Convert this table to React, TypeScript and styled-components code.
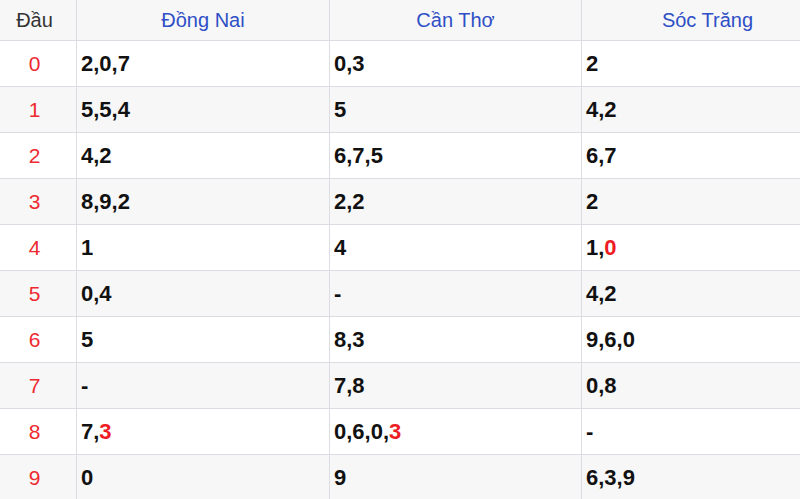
import React from "react";
import styled, { createGlobalStyle } from "styled-components";

const Global = createGlobalStyle`
  html, body { margin: 0; padding: 0; background: #fff; overflow: hidden; }
  body { font-family: "Liberation Sans", Arial, sans-serif; }
`;

const Viewport = styled.div`
  width: 800px;
  height: 499px;
  overflow: hidden;
`;

const Table = styled.div`
  width: 833px;
  display: flex;
  flex-direction: column;
`;

const Row = styled.div<{ $head?: boolean; $shade?: boolean }>`
  display: grid;
  grid-template-columns: 76px 253px 252px 252px;
  height: ${(p) => (p.$head ? "40px" : "46px")};
  box-sizing: border-box;
  border-top: ${(p) => (p.$head ? "none" : "1px solid #dcdde3")};
  background: ${(p) => (p.$shade ? "#f7f7f7" : "#ffffff")};
`;

const Cell = styled.div<{ $first?: boolean }>`
  box-sizing: border-box;
  display: flex;
  align-items: center;
  border-left: ${(p) => (p.$first ? "none" : "1px solid #dcdde3")};
  padding-right: ${(p) => (p.$first ? "7px" : "0")};
`;

const HeadCell = styled(Cell)<{ $blue?: boolean }>`
  justify-content: center;
  font-size: 20px;
  color: ${(p) => (p.$blue ? "#2f4fc6" : "#333333")};
`;

const KeyCell = styled(Cell)`
  justify-content: center;
  font-size: 21px;
  color: #ee2a31;
`;

const ValueCell = styled(Cell)`
  padding-left: 4px;
  font-size: 22px;
  font-weight: 700;
  color: #111111;
`;

const Hot = styled.span`
  color: #ee1c24;
`;

type V = { text: string; hot?: string };

const rows: V[][] = [
  [{ text: "2,0,7" }, { text: "0,3" }, { text: "2" }],
  [{ text: "5,5,4" }, { text: "5" }, { text: "4,2" }],
  [{ text: "4,2" }, { text: "6,7,5" }, { text: "6,7" }],
  [{ text: "8,9,2" }, { text: "2,2" }, { text: "2" }],
  [{ text: "1" }, { text: "4" }, { text: "1,", hot: "0" }],
  [{ text: "0,4" }, { text: "-" }, { text: "4,2" }],
  [{ text: "5" }, { text: "8,3" }, { text: "9,6,0" }],
  [{ text: "-" }, { text: "7,8" }, { text: "0,8" }],
  [{ text: "7,", hot: "3" }, { text: "0,6,0,", hot: "3" }, { text: "-" }],
  [{ text: "0" }, { text: "9" }, { text: "6,3,9" }],
];

export default function App() {
  return (
    <>
      <Global />
      <Viewport>
        <Table>
          <Row $head $shade>
            <HeadCell $first>Đầu</HeadCell>
            <HeadCell $blue>Đồng Nai</HeadCell>
            <HeadCell $blue>Cần Thơ</HeadCell>
            <HeadCell $blue>Sóc Trăng</HeadCell>
          </Row>
          {rows.map((r, i) => (
            <Row key={i} $shade={i % 2 === 1}>
              <KeyCell $first>{i}</KeyCell>
              {r.map((v, j) => (
                <ValueCell key={j}>
                  {v.text}
                  {v.hot && <Hot>{v.hot}</Hot>}
                </ValueCell>
              ))}
            </Row>
          ))}
        </Table>
      </Viewport>
    </>
  );
}
